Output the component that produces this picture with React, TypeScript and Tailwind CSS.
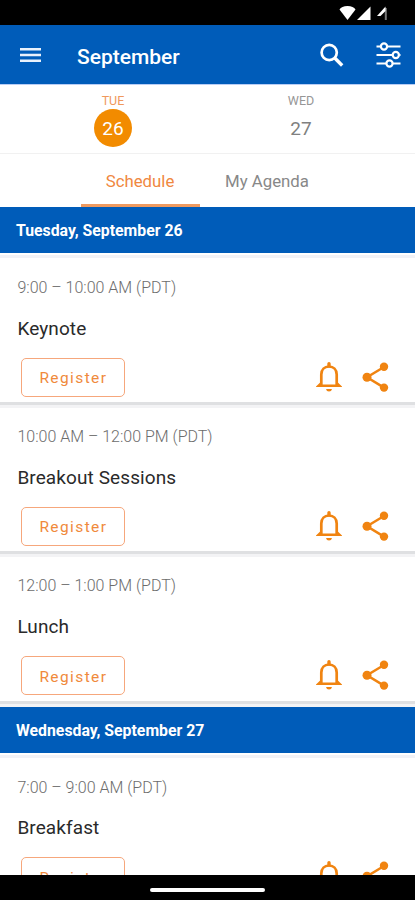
import { clsx } from "clsx";

type Session = {
  time: string;
  title: string;
};

type Day = {
  label: string;
  sessions: Session[];
};

const days: Day[] = [
  {
    label: "Tuesday, September 26",
    sessions: [
      { time: "9:00 – 10:00 AM (PDT)", title: "Keynote" },
      { time: "10:00 AM – 12:00 PM (PDT)", title: "Breakout Sessions" },
      { time: "12:00 – 1:00 PM (PDT)", title: "Lunch" },
    ],
  },
  {
    label: "Wednesday, September 27",
    sessions: [{ time: "7:00 – 9:00 AM (PDT)", title: "Breakfast" }],
  },
];

function StatusBar() {
  return (
    <div className="flex h-[25px] shrink-0 justify-end bg-black pr-[26px]">
      <svg width="50" height="25" viewBox="0 0 50 25" fill="#fff">
        <path d="M.5 9.5Q2.5 6 8.5 6T16.5 9.5L8.5 20Z" />
        <path d="M31.5 6.5V20H18Z" />
        <path d="M46.8 8V20" fill="none" stroke="#777" strokeWidth="2" />
        <path d="M38 16L46.5 6.5V11L41.5 16Z" />
      </svg>
    </div>
  );
}

function Header() {
  return (
    <header className="flex h-[60px] shrink-0 items-center border-b border-[#b8cdf5] bg-[#005cb9] pr-[14px] pl-5 text-white">
      <svg width="21" height="16" viewBox="0 0 21 16" stroke="#e9f1fc" strokeWidth="2.6" className="mt-px">
        <path d="M0 2.2H21M0 8H21M0 13.8H21" />
      </svg>
      <h1 className="mt-1 ml-9 flex-1 text-[21px] leading-7 font-medium">September</h1>
      <svg width="26" height="26" viewBox="0 0 26 26" fill="none" stroke="#fff" className="mt-px mr-[31px]">
        <circle cx="10.2" cy="10.5" r="7.6" strokeWidth="2.7" />
        <path d="M15.5 15.8L23.2 23.5" strokeWidth="3.4" />
      </svg>
      <svg width="25" height="26" viewBox="0 0 25 26" fill="none" stroke="#fff" strokeWidth="2.2">
        <path d="M.5 4.5H4.5M11.5 4.5H24.5M.5 13H16.5M23.5 13H24.5M.5 21.5H10M17 21.5H24.5" />
        <circle cx="8" cy="4.5" r="3.1" />
        <circle cx="19.8" cy="13" r="3.1" />
        <circle cx="13.5" cy="21.5" r="3.1" />
      </svg>
    </header>
  );
}

function DateCell({ day, date, active }: { day: string; date: number; active?: boolean }) {
  return (
    <div className="flex w-[188px] flex-col items-center pt-2">
      <span className={clsx("text-[12.5px] leading-4", active ? "text-[#f0985c]" : "text-[#969696]")}>
        {day}
      </span>
      <span
        className={clsx(
          "flex size-[38px] items-center justify-center rounded-full pt-[3px] text-[19px]",
          active ? "bg-[#f28b00] text-white" : "text-[#808080]"
        )}
      >
        {date}
      </span>
    </div>
  );
}

function BellIcon() {
  return (
    <svg width="26" height="30" viewBox="0 0 26 30" fill="none" stroke="#f08411">
      <path d="M13 1.8V4" strokeWidth="3.4" strokeLinecap="round" />
      <path d="M5.3 23V12.5C5.3 7.5 8.6 4.5 13 4.5S20.7 7.5 20.7 12.5V23" strokeWidth="2.7" />
      <path d="M5 21.3L2.5 23.8H23.5L21 21.3" strokeWidth="2.4" />
      <path d="M10 27H16Q15.5 29.5 13 29.5T10 27Z" fill="#f08411" stroke="none" />
    </svg>
  );
}

function ShareIcon() {
  return (
    <svg width="27" height="30" viewBox="0 0 27 30" fill="#f08411">
      <path d="M22 5L5 15.3L22 25.6" fill="none" stroke="#f08411" strokeWidth="2.5" />
      <circle cx="22" cy="4.8" r="4.2" />
      <circle cx="5" cy="15.3" r="4.5" />
      <circle cx="22" cy="25.6" r="4.2" />
    </svg>
  );
}

function SessionCard({ time, title }: Session) {
  return (
    <div className="h-[149.3px] shrink-0">
      <div className="flex h-[148px] flex-col border-b-[3px] border-[#dfe0e2] px-[17.4px] pt-[20.8px] shadow-[0_3px_0_#f3f3f5]">
        <p className="text-[16px] leading-5 font-light text-[#6c6c6c]">{time}</p>
        <h3 className="mt-[18.8px] text-[19px] leading-6 tracking-[0.1px] text-[#2a2a2a]">{title}</h3>
        <div className="mt-[17px] flex items-center pl-1">
          <button className="h-[39px] w-[104px] rounded-[5px] border-[1.5px] border-[#f6a77c] pt-[3px] text-[15.5px] tracking-[1.4px] text-[#f08a3c]">
            Register
          </button>
          <div className="-mt-px ml-auto flex gap-5 pr-[9px]">
            <BellIcon />
            <ShareIcon />
          </div>
        </div>
      </div>
    </div>
  );
}

export default function App() {
  return (
    <div className="flex h-[900px] w-[415px] flex-col overflow-hidden bg-white font-[Roboto,sans-serif]">
      <StatusBar />
      <Header />

      <div className="flex h-[69px] shrink-0 border-b border-[#f1f1f1] pl-[19px]">
        <DateCell day="TUE" date={26} active />
        <DateCell day="WED" date={27} />
      </div>

      <div className="flex h-[53px] shrink-0 pl-[81px] text-[16.8px]">
        <div className="flex w-[119px] items-center justify-center border-b-[3px] border-[#ef9a5f] pt-[5px] pr-px text-[#f0883f]">
          Schedule
        </div>
        <div className="flex w-[135px] items-center justify-center pt-[2px] pr-px text-[#888]">
          My Agenda
        </div>
      </div>

      <main className="flex flex-1 flex-col overflow-hidden">
        {days.map((day) => (
          <section key={day.label} className="shrink-0">
            <h2 className="flex h-[46px] items-center bg-[#005cb9] px-4 pt-0.5 text-[15.8px] font-bold text-white">
              {day.label}
            </h2>
            <div className="h-[5px] border-t-2 border-white bg-[#f1f2f7]" />
            <div className="-mt-px mb-[2px]">
              {day.sessions.map((session) => (
                <SessionCard key={session.title} {...session} />
              ))}
            </div>
          </section>
        ))}
      </main>

      {/* Home indicator */}
      <div className="flex h-[25px] shrink-0 justify-center bg-black pt-[13px]">
        <div className="h-1 w-[115px] rounded-full bg-white" />
      </div>
    </div>
  );
}
